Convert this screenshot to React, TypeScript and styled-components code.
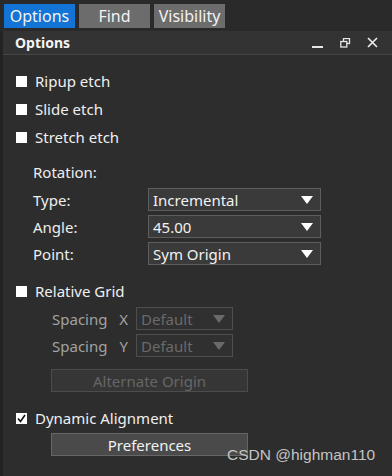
import React from "react";
import styled, { createGlobalStyle } from "styled-components";

const Global = createGlobalStyle`
  html, body { margin: 0; padding: 0; background: #2a2a2a; }
  body { font-family: "Noto Sans", "Open Sans", sans-serif; color: #eeeeee; }
  * { box-sizing: border-box; }
`;

const Page = styled.div`
  width: 392px;
  height: 476px;
  position: relative;
  overflow: hidden;
  background: #2a2a2a;
  display: flex;
  flex-direction: column;
`;

const TabBar = styled.div`
  display: flex;
  gap: 4px;
  padding: 4px 0 0 4px;
  height: 31px;
`;

const Tab = styled.div<{ $active?: boolean }>`
  width: 71px;
  height: 24px;
  background: ${(p) => (p.$active ? "#1374d6" : "#6c6c6c")};
  color: #f2f2f2;
  font-size: 16px;
  line-height: 24px;
  text-align: center;
  white-space: nowrap;
`;

const Panel = styled.div`
  flex: 1;
  display: flex;
  flex-direction: column;
  border-left: 3px solid #232323;
  background: #2d2d2d;
`;

const Header = styled.div`
  height: 24px;
  background: #333333;
  border-bottom: 1px solid #454545;
  display: flex;
  align-items: center;
  padding-left: 12px;
  padding-right: 14px;
`;

const Title = styled.div`
  flex: 1;
  font-weight: 700;
  font-size: 14px;
  color: #f4f4f4;
`;

const HeaderIcons = styled.div`
  display: flex;
  align-items: center;
  gap: 16px;
`;

const Body = styled.div`
  display: flex;
  flex-direction: column;
  padding: 12px 0 0 13px;
`;

const CheckRow = styled.label<{ $mt?: number }>`
  display: flex;
  align-items: center;
  height: 28px;
  margin-top: ${(p) => p.$mt ?? 0}px;
  font-size: 15px;
  color: #f0f0f0;
  gap: 8px;
`;

const Box = styled.span`
  width: 11px;
  height: 11px;
  background: #ffffff;
  display: inline-flex;
  align-items: center;
  justify-content: center;
`;

const Section = styled.div`
  display: flex;
  flex-direction: column;
  padding-left: 17px;
`;

const SectionLabel = styled.div`
  font-size: 15px;
  height: 27px;
  line-height: 27px;
  margin-top: 8px;
  color: #eeeeee;
`;

const FieldRow = styled.div`
  display: grid;
  grid-template-columns: 115px 173px;
  align-items: center;
  height: 27px;
  font-size: 15px;
  color: #eeeeee;
`;

const Select = styled.div<{ $disabled?: boolean; $w?: number }>`
  height: 23px;
  width: ${(p) => p.$w ?? 173}px;
  display: flex;
  align-items: center;
  padding: 0 7px 0 4px;
  border: 1.5px solid ${(p) => (p.$disabled ? "#4e4e4e" : "#5e5e5e")};
  background: ${(p) => (p.$disabled ? "#303030" : "#3a3a3a")};
  color: ${(p) => (p.$disabled ? "#6a6a6a" : "#f2f2f2")};
  font-size: 15px;
`;

const SelectText = styled.span`
  flex: 1;
  white-space: nowrap;
`;

const Arrow = styled.span<{ $disabled?: boolean }>`
  width: 0;
  height: 0;
  border-left: 6px solid transparent;
  border-right: 6px solid transparent;
  border-top: 8px solid ${(p) => (p.$disabled ? "#6a6a6a" : "#ffffff")};
`;

const SubSection = styled.div`
  display: flex;
  flex-direction: column;
  padding-left: 36px;
`;

const SpacingRow = styled.div`
  display: flex;
  align-items: center;
  height: 27px;
  font-size: 15px;
  color: #a2a2a2;
`;

const SpacingLabel = styled.span`
  width: 84px;
  display: flex;
  justify-content: space-between;
  padding-right: 8px;
`;

const Button = styled.div<{ $disabled?: boolean; $mt?: number }>`
  width: 197px;
  height: 23px;
  margin-left: 35px;
  margin-top: ${(p) => p.$mt ?? 0}px;
  display: flex;
  align-items: center;
  justify-content: center;
  font-size: 15px;
  border: 1.5px solid ${(p) => (p.$disabled ? "#4c4c4c" : "#666666")};
  background: ${(p) => (p.$disabled ? "#363636" : "#4a4a4a")};
  color: ${(p) => (p.$disabled ? "#666666" : "#f2f2f2")};
`;

const Watermark = styled.div`
  position: absolute;
  left: 227px;
  top: 446px;
  font-family: "Liberation Sans", Arial, sans-serif;
  font-size: 15.5px;
  color: #c4c4c4;
  white-space: nowrap;
`;

const Check = ({ checked }: { checked?: boolean }) => (
  <Box>
    {checked && (
      <svg width="11" height="11" viewBox="0 0 11 11">
        <path d="M2 5.5 L4.5 8.5 L9 2" stroke="#111" strokeWidth="1.6" fill="none" />
      </svg>
    )}
  </Box>
);

const Drop = ({ text, disabled, w }: { text: string; disabled?: boolean; w?: number }) => (
  <Select $disabled={disabled} $w={w}>
    <SelectText>{text}</SelectText>
    <Arrow $disabled={disabled} />
  </Select>
);

export default function App() {
  return (
    <Page>
      <Global />
      <TabBar>
        <Tab $active>Options</Tab>
        <Tab>Find</Tab>
        <Tab>Visibility</Tab>
      </TabBar>
      <Panel>
        <Header>
          <Title>Options</Title>
          <HeaderIcons>
            <svg width="12" height="12" viewBox="0 0 12 12">
              <rect x="0" y="9" width="11" height="2" fill="#e6e6e6" />
            </svg>
            <svg width="11" height="10" viewBox="0 0 11 10">
              <rect x="3.5" y="0.5" width="6" height="5" fill="none" stroke="#e6e6e6" strokeWidth="1.3" />
              <rect x="0.8" y="3.5" width="6" height="5.5" fill="#333" stroke="#e6e6e6" strokeWidth="1.3" />
            </svg>
            <svg width="11" height="11" viewBox="0 0 11 11">
              <path d="M1 1 L10 10 M10 1 L1 10" stroke="#eeeeee" strokeWidth="1.6" />
            </svg>
          </HeaderIcons>
        </Header>
        <Body>
          <CheckRow><Check />Ripup etch</CheckRow>
          <CheckRow><Check />Slide etch</CheckRow>
          <CheckRow><Check />Stretch etch</CheckRow>
          <Section>
            <SectionLabel>Rotation:</SectionLabel>
            <FieldRow><span>Type:</span><Drop text="Incremental" /></FieldRow>
            <FieldRow><span>Angle:</span><Drop text="45.00" /></FieldRow>
            <FieldRow><span>Point:</span><Drop text="Sym Origin" /></FieldRow>
          </Section>
          <CheckRow $mt={10}><Check />Relative Grid</CheckRow>
          <SubSection>
            <SpacingRow>
              <SpacingLabel><span>Spacing</span><span>X</span></SpacingLabel>
              <Drop text="Default" disabled w={97} />
            </SpacingRow>
            <SpacingRow>
              <SpacingLabel><span>Spacing</span><span>Y</span></SpacingLabel>
              <Drop text="Default" disabled w={97} />
            </SpacingRow>
          </SubSection>
          <Button $disabled $mt={10}>Alternate Origin</Button>
          <CheckRow $mt={12}><Check checked />Dynamic Alignment</CheckRow>
          <Button $mt={1}>Preferences</Button>
        </Body>
      </Panel>
      <Watermark>CSDN @highman110</Watermark>
    </Page>
  );
}
